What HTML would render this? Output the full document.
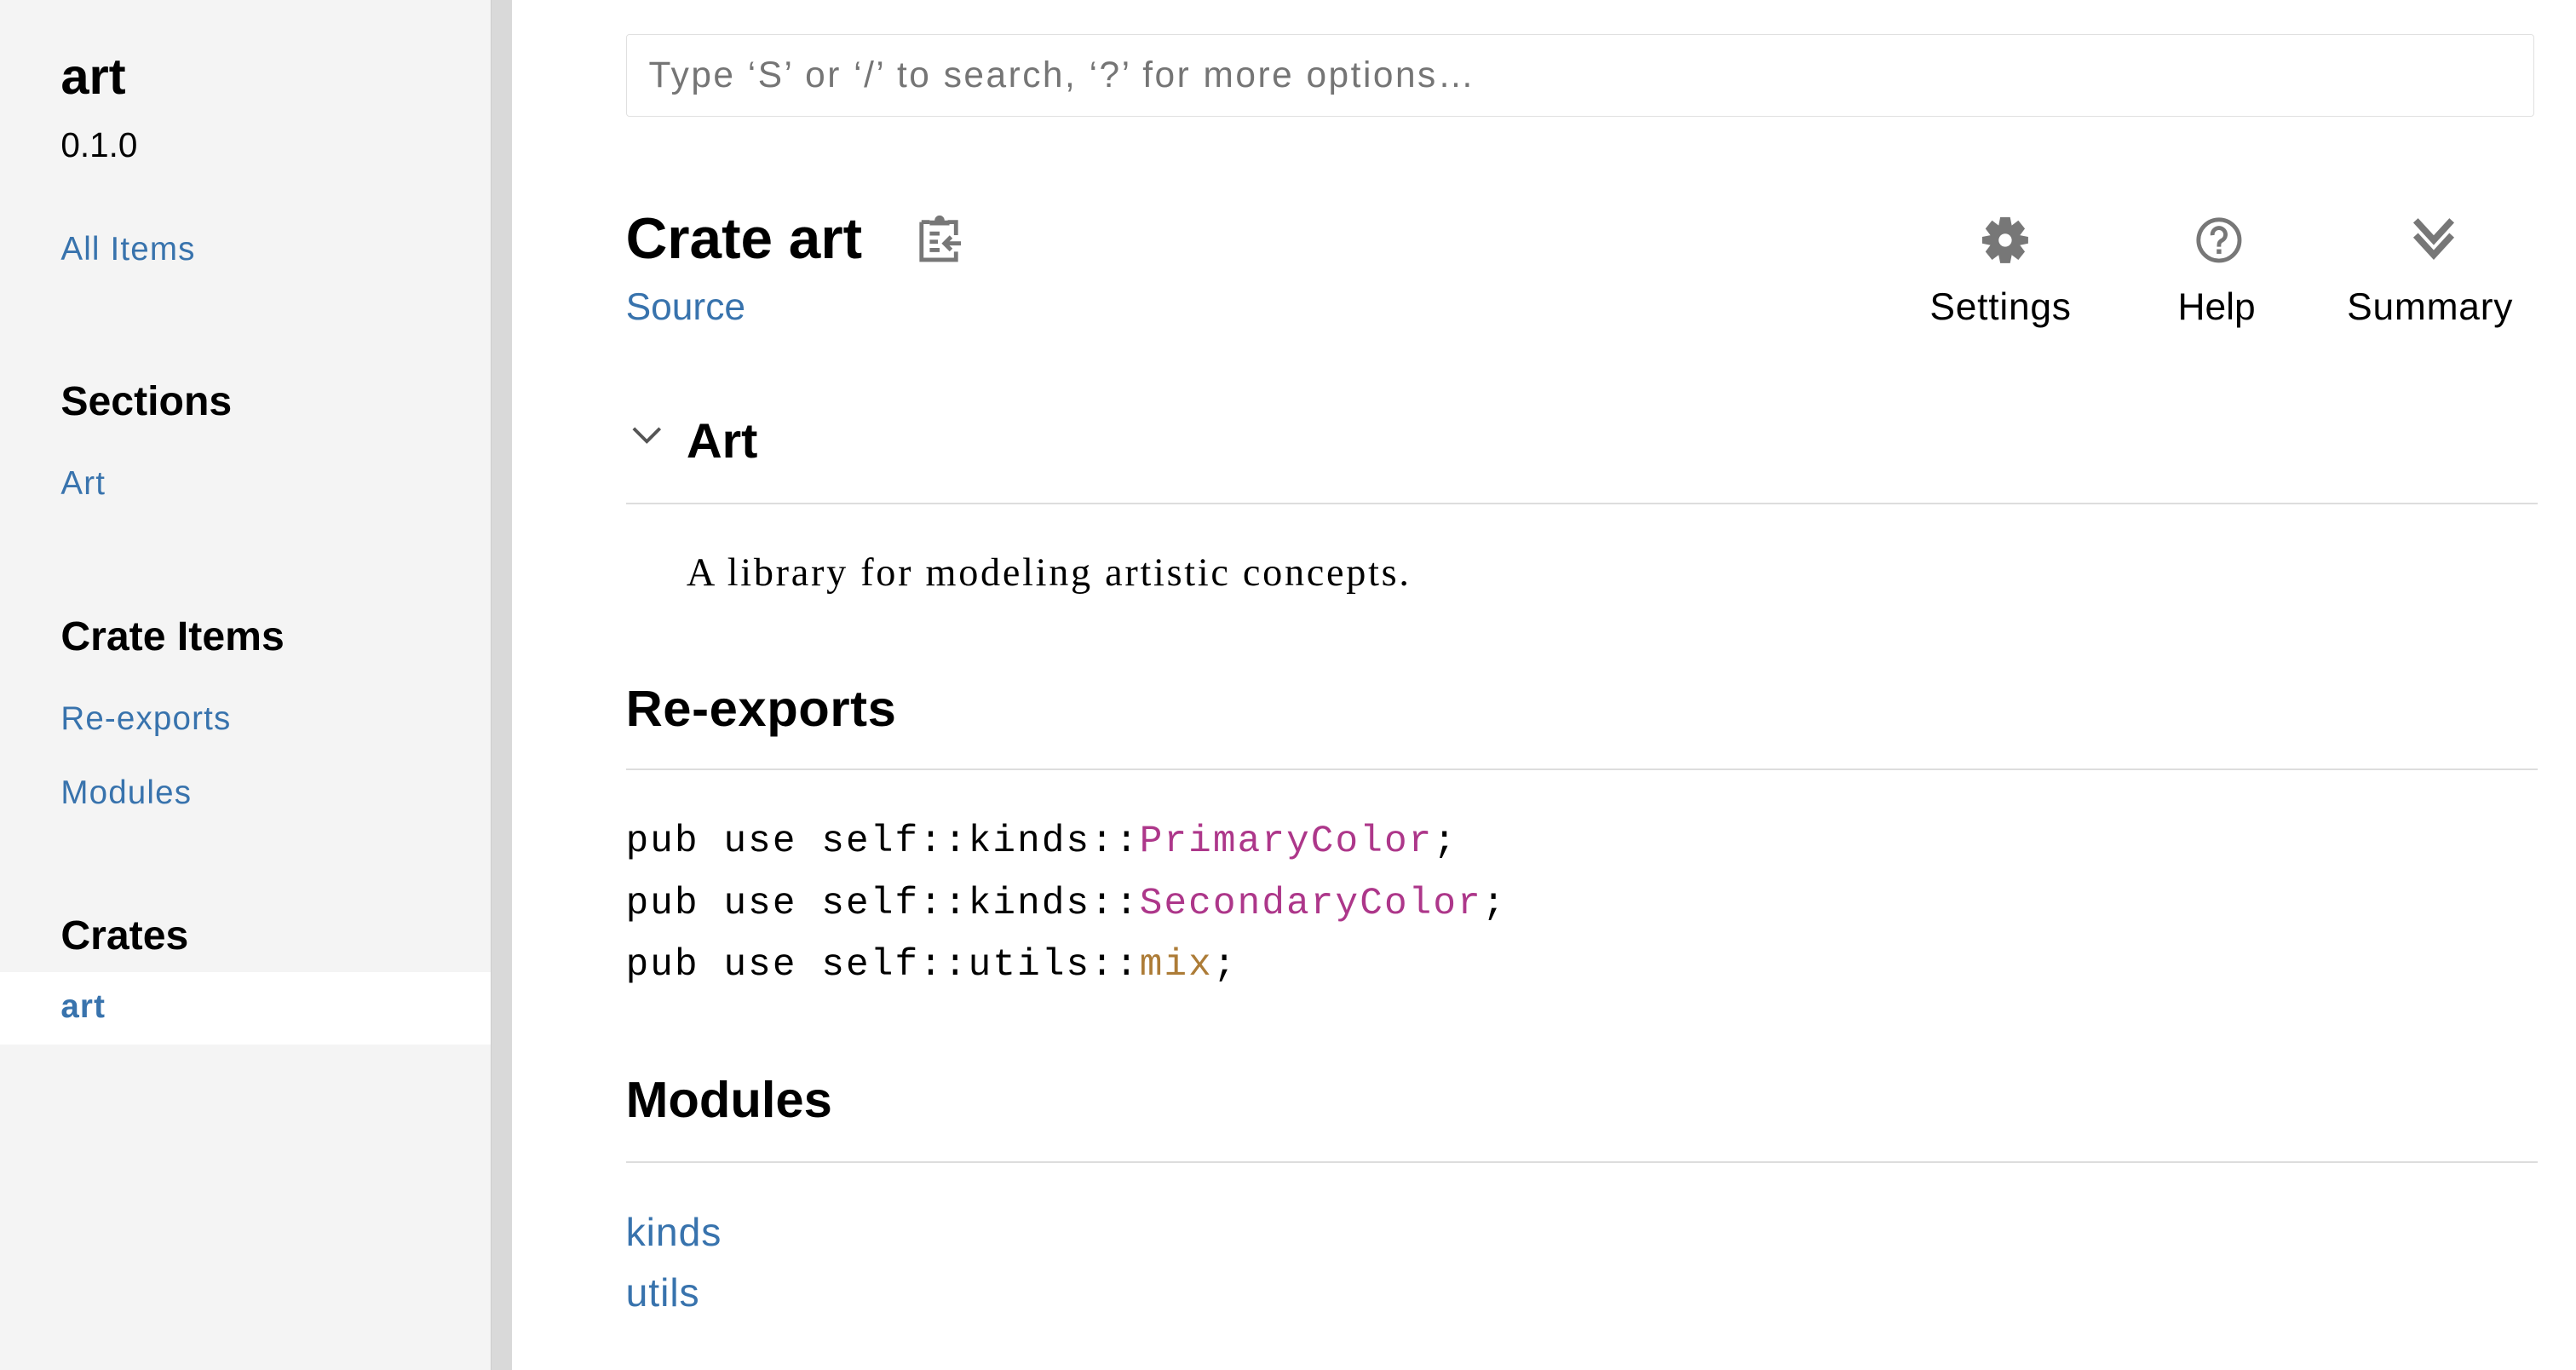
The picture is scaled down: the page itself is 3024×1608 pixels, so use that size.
<!DOCTYPE html>
<html><head><meta charset="utf-8"><style>
html,body{margin:0;padding:0;background:#fff;overflow:hidden}
#root{position:relative;width:1570px;height:834px;zoom:1.928;font-family:"Liberation Sans",sans-serif;color:#000}
.a{position:absolute;white-space:nowrap;line-height:1}
.side{position:absolute;left:0;top:0;width:299px;height:834px;background:#f4f4f4}
.strip{position:absolute;left:299px;top:0;width:12px;height:834px;background:#d9d9d9;border-left:1px solid #ccc}
.blue{color:#3873ad}
.b{font-weight:bold}
.sl{letter-spacing:0.6px}
.hr{position:absolute;left:381px;width:1164px;height:1px;background:#ddd}
.mono{font-family:"Liberation Mono",monospace;font-size:23px;letter-spacing:1.1px}
.ty{color:#ad378a}.fn{color:#ad7c37}
</style></head><body><div id="root">
<div class="side"></div><div class="strip"></div>
<div class="a b" style="left:37px;top:31px;font-size:31px">art</div>
<div class="a" style="left:37px;top:78px;font-size:21px">0.1.0</div>
<div class="a blue sl" style="left:37px;top:142px;font-size:20px">All Items</div>
<div class="a b" style="left:37px;top:232px;font-size:25px">Sections</div>
<div class="a blue sl" style="left:37px;top:285px;font-size:20px">Art</div>
<div class="a b" style="left:37px;top:375px;font-size:25px">Crate Items</div>
<div class="a blue sl" style="left:37px;top:428px;font-size:20px">Re-exports</div>
<div class="a blue sl" style="left:37px;top:473px;font-size:20px">Modules</div>
<div class="a b" style="left:37px;top:557px;font-size:25px">Crates</div>
<div style="position:absolute;left:0;top:592px;width:299px;height:44px;background:#fff"></div>
<div class="a blue b sl" style="left:37px;top:603px;font-size:20px">art</div>

<div style="position:absolute;left:381px;top:21px;width:1161px;height:49px;border:1px solid #e0e0e0;border-radius:2px"></div>
<div class="a" style="left:395px;top:35px;font-size:22px;color:#757575;letter-spacing:1.3px">Type ‘S’ or ‘/’ to search, ‘?’ for more options…</div>

<div class="a b" style="left:381px;top:128px;font-size:35px">Crate art</div>
<svg style="position:absolute;left:558px;top:130px" width="28" height="30" viewBox="0 0 28 30"><path d="M3 5h5M19 5h5v8M24 23v5H3V5" fill="none" stroke="#777" stroke-width="2.5"/><path d="M8 7V4h3a3 3 0 0 1 6 0h3v3z" fill="#777"/><path d="M8 12h6M8 17h5M8 22h6" stroke="#777" stroke-width="2.5"/><path d="M27 18h-9M21 14l-4 4 4 4" fill="none" stroke="#777" stroke-width="2.5"/></svg>
<div class="a blue" style="left:381px;top:176px;font-size:23px">Source</div>

<svg style="position:absolute;left:1206px;top:131px" width="30" height="30" viewBox="0 0 30 30"><path fill="#777" fill-rule="evenodd" d="M12 1h6l1 5 4-3 4 5-3 4 5 1v4l-5 1 3 4-4 5-4-3-1 5h-6l-1-5-4 3-4-5 3-4-5-1v-4l5-1-3-4 4-5 4 3zM15 11a4 4 0 1 0 0.01 0z"/></svg>
<div class="a" style="left:1175px;top:176px;font-size:23px;letter-spacing:0.4px">Settings</div>
<svg style="position:absolute;left:1336px;top:131px" width="30" height="30" viewBox="0 0 30 30"><circle cx="15" cy="15" r="12.5" fill="none" stroke="#777" stroke-width="2.5"/><path d="M11 12a4 4 0 1 1 6 3c-2 1-2 2-2 4" fill="none" stroke="#777" stroke-width="2.5"/><rect x="13.6" y="20.5" width="2.8" height="2.8" fill="#777"/></svg>
<div class="a" style="left:1326px;top:176px;font-size:23px">Help</div>
<svg style="position:absolute;left:1468px;top:131px" width="28" height="30" viewBox="0 0 28 30"><path d="M3 3l11 12 11-12M3 12l11 12 11-12" fill="none" stroke="#777" stroke-width="4"/></svg>
<div class="a" style="left:1429px;top:176px;font-size:23px;letter-spacing:0.4px">Summary</div>

<svg style="position:absolute;left:384px;top:258px" width="20" height="14" viewBox="0 0 20 14"><path d="M2 3l8 8 8-8" fill="none" stroke="#555" stroke-width="2"/></svg>
<div class="a b" style="left:418px;top:254px;font-size:30px">Art</div>
<div class="hr" style="top:306px"></div>
<div class="a" style="left:418px;top:337px;font-size:24px;font-family:'Liberation Serif',serif;letter-spacing:1.4px">A library for modeling artistic concepts.</div>

<div class="a b" style="left:381px;top:416px;font-size:31px;letter-spacing:0.3px">Re-exports</div>
<div class="hr" style="top:468px"></div>
<div class="a mono" style="left:381px;top:501px">pub use self::kinds::<span class="ty">PrimaryColor</span>;</div>
<div class="a mono" style="left:381px;top:539px">pub use self::kinds::<span class="ty">SecondaryColor</span>;</div>
<div class="a mono" style="left:381px;top:576px">pub use self::utils::<span class="fn">mix</span>;</div>

<div class="a b" style="left:381px;top:654px;font-size:31px">Modules</div>
<div class="hr" style="top:707px"></div>
<div class="a blue" style="left:381px;top:738px;font-size:24px;letter-spacing:0.5px">kinds</div>
<div class="a blue" style="left:381px;top:775px;font-size:24px;letter-spacing:0.5px">utils</div>
</div></body></html>
